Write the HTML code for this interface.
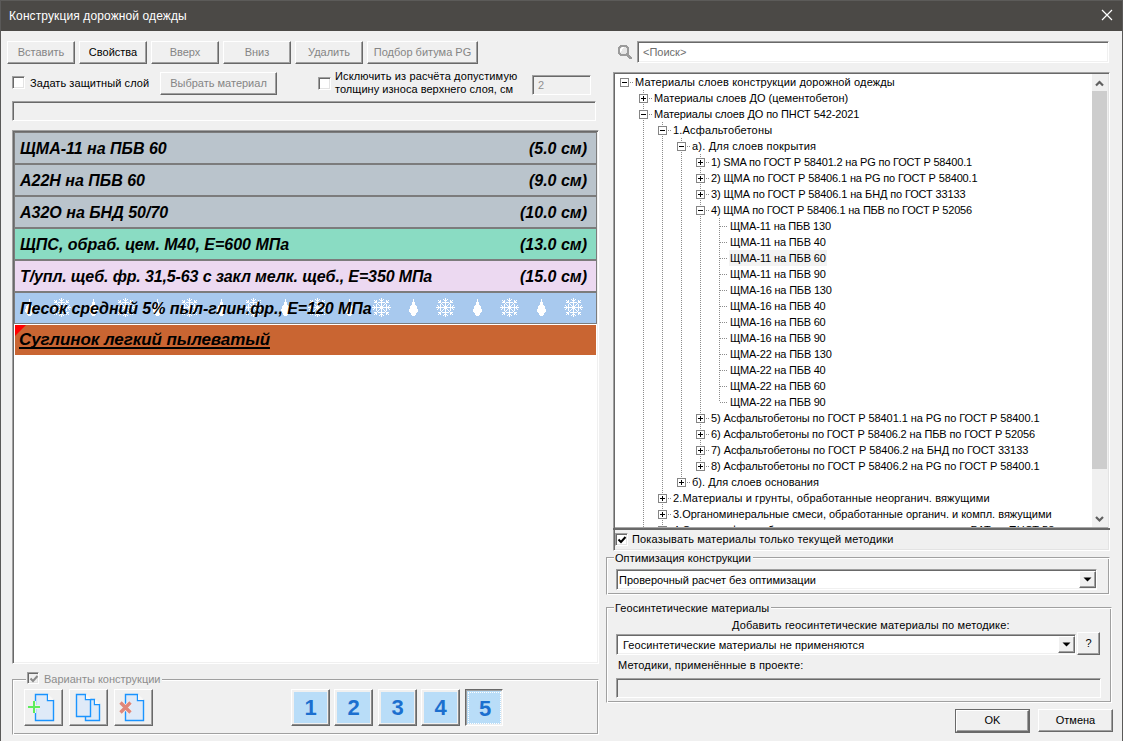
<!DOCTYPE html>
<html><head><meta charset="utf-8">
<style>
*{box-sizing:border-box;margin:0;padding:0}
html,body{width:1123px;height:741px;overflow:hidden;background:#f0f0f0}
body{position:relative;font-family:"Liberation Sans",sans-serif;font-size:11px;color:#000}
.a{position:absolute}
.t{position:absolute;white-space:pre;line-height:13px}
.raised{position:absolute;background:#f0f0f0;border:1px solid;border-color:#fff #696969 #696969 #fff;box-shadow:inset -1px -1px #a0a0a0,inset 1px 1px #f0f0f0}
.sunken{position:absolute;border:1px solid;border-color:#a0a0a0 #fff #fff #a0a0a0;box-shadow:inset 1px 1px #696969,inset -1px -1px #f0f0f0}
.btn{display:flex;align-items:center;justify-content:center;white-space:pre;padding-bottom:2px}
.dis{color:#858585}
.cb{position:absolute;width:13px;height:13px;background:#fff;border:1px solid;border-color:#a0a0a0 #fff #fff #a0a0a0;box-shadow:inset 1px 1px #696969,inset -1px -1px #e3e3e3}
.grp{position:absolute;border:1px solid;border-color:#a0a0a0 #fff #fff #a0a0a0;box-shadow:inset 1px 1px #fff,inset -1px -1px #a0a0a0}
.b16{font-size:16px;line-height:18px;font-weight:bold;font-style:italic}
.glbl{position:absolute;background:#f0f0f0;white-space:pre;line-height:13px;padding:0 2px 0 1px}
</style></head><body>
<!-- title bar -->
<div class="a" style="left:0;top:0;width:1123px;height:31px;background:#4b4946;border-top:1px solid #5c5b59"></div>
<div class="a" style="left:0;top:0;width:1px;height:741px;background:#5a5958"></div>
<div class="a" style="left:1122px;top:0;width:1px;height:741px;background:#5a5958"></div>
<div class="t" style="left:9px;top:9px;font-size:12px;line-height:15px;color:#fff;letter-spacing:0.11px">Конструкция дорожной одежды</div>
<svg class="a" style="left:1101px;top:9px" width="12" height="12" viewBox="0 0 12 12"><path d="M1 1L11 11M11 1L1 11" stroke="#fff" stroke-width="1.2"/></svg>

<!-- top buttons -->
<div class="raised btn dis" style="left:7px;top:41px;width:68px;height:23px">Вставить</div>
<div class="raised btn" style="left:79px;top:41px;width:68px;height:23px">Свойства</div>
<div class="raised btn dis" style="left:151px;top:41px;width:68px;height:23px">Вверх</div>
<div class="raised btn dis" style="left:223px;top:41px;width:68px;height:23px">Вниз</div>
<div class="raised btn dis" style="left:295px;top:41px;width:68px;height:23px">Удалить</div>
<div class="raised btn dis" style="left:367px;top:41px;width:111px;height:23px">Подбор битума PG</div>

<div class="cb" style="left:12px;top:76px"></div>
<div class="t" style="left:30px;top:77px;letter-spacing:0.07px">Задать защитный слой</div>
<div class="raised btn dis" style="left:160px;top:72px;width:117px;height:23px">Выбрать материал</div>
<div class="cb" style="left:318px;top:77px"></div>
<div class="t" style="left:335px;top:70px;letter-spacing:0.135px">Исключить из расчёта допустимую</div><div class="t" style="left:335px;top:83px;letter-spacing:0.04px">толщину износа верхнего слоя, см</div>
<div class="sunken" style="left:532px;top:75px;width:59px;height:20px;background:#f0f0f0"><span class="t dis" style="left:5px;top:3px;color:#909090">2</span></div>
<div class="sunken" style="left:12px;top:101px;width:584px;height:20px;background:#f0f0f0"></div>

<!-- layer list -->
<div class="sunken" style="left:12px;top:130px;width:587px;height:534px;background:#fff"></div>
<div class="a" style="left:14px;top:132px;width:583px;height:32px;border:1px solid #7c7c7c;background:#bac4cc"></div>
<div class="a" style="left:14px;top:164px;width:583px;height:32px;border:1px solid #7c7c7c;background:#bac4cc"></div>
<div class="a" style="left:14px;top:196px;width:583px;height:32px;border:1px solid #7c7c7c;background:#bac4cc"></div>
<div class="a" style="left:14px;top:228px;width:583px;height:32px;border:1px solid #7c7c7c;background:#8adcc3"></div>
<div class="a" style="left:14px;top:260px;width:583px;height:32px;border:1px solid #7c7c7c;background:#ecd9f1"></div>
<div class="a" style="left:14px;top:292px;width:583px;height:32px;border:1px solid #7c7c7c;background:#a8c9ee"></div>
<svg class="a" style="left:0;top:0" width="600" height="330" shape-rendering="crispEdges"><path fill="#fff" d="M61 298h1v1h-1zM59 299h1v1h-1zM61 299h1v1h-1zM63 299h1v1h-1zM54 300h1v1h-1zM56 300h1v1h-1zM60 300h3v1h-3zM66 300h1v1h-1zM68 300h1v1h-1zM55 301h2v1h-2zM61 301h1v1h-1zM66 301h2v1h-2zM54 302h3v1h-3zM58 302h7v1h-7zM66 302h3v1h-3zM57 303h1v1h-1zM61 303h1v1h-1zM65 303h1v1h-1zM56 304h1v1h-1zM58 304h1v1h-1zM61 304h1v1h-1zM64 304h1v1h-1zM66 304h1v1h-1zM53 305h1v1h-1zM56 305h1v1h-1zM59 305h1v1h-1zM61 305h1v1h-1zM63 305h1v1h-1zM66 305h1v1h-1zM69 305h1v1h-1zM54 306h1v1h-1zM56 306h1v1h-1zM60 306h3v1h-3zM66 306h1v1h-1zM68 306h1v1h-1zM52 307h19v1h-19zM54 308h1v1h-1zM56 308h1v1h-1zM60 308h3v1h-3zM66 308h1v1h-1zM68 308h1v1h-1zM53 309h1v1h-1zM56 309h1v1h-1zM59 309h1v1h-1zM61 309h1v1h-1zM63 309h1v1h-1zM66 309h1v1h-1zM69 309h1v1h-1zM56 310h1v1h-1zM58 310h1v1h-1zM61 310h1v1h-1zM64 310h1v1h-1zM66 310h1v1h-1zM57 311h1v1h-1zM61 311h1v1h-1zM65 311h1v1h-1zM54 312h3v1h-3zM58 312h7v1h-7zM66 312h3v1h-3zM55 313h2v1h-2zM61 313h1v1h-1zM66 313h2v1h-2zM54 314h1v1h-1zM56 314h1v1h-1zM60 314h3v1h-3zM66 314h1v1h-1zM68 314h1v1h-1zM59 315h1v1h-1zM61 315h1v1h-1zM63 315h1v1h-1zM61 316h1v1h-1zM29 299h1v1h-1zM29 300h1v1h-1zM29 301h1v1h-1zM28 302h3v1h-3zM28 303h3v1h-3zM28 304h3v1h-3zM27 305h5v1h-5zM26 306h7v1h-7zM26 307h7v1h-7zM26 308h7v1h-7zM25 309h9v1h-9zM25 310h9v1h-9zM25 311h9v1h-9zM26 312h7v1h-7zM27 313h5v1h-5zM27 314h5v1h-5zM28 315h3v1h-3zM125 298h1v1h-1zM123 299h1v1h-1zM125 299h1v1h-1zM127 299h1v1h-1zM118 300h1v1h-1zM120 300h1v1h-1zM124 300h3v1h-3zM130 300h1v1h-1zM132 300h1v1h-1zM119 301h2v1h-2zM125 301h1v1h-1zM130 301h2v1h-2zM118 302h3v1h-3zM122 302h7v1h-7zM130 302h3v1h-3zM121 303h1v1h-1zM125 303h1v1h-1zM129 303h1v1h-1zM120 304h1v1h-1zM122 304h1v1h-1zM125 304h1v1h-1zM128 304h1v1h-1zM130 304h1v1h-1zM117 305h1v1h-1zM120 305h1v1h-1zM123 305h1v1h-1zM125 305h1v1h-1zM127 305h1v1h-1zM130 305h1v1h-1zM133 305h1v1h-1zM118 306h1v1h-1zM120 306h1v1h-1zM124 306h3v1h-3zM130 306h1v1h-1zM132 306h1v1h-1zM116 307h19v1h-19zM118 308h1v1h-1zM120 308h1v1h-1zM124 308h3v1h-3zM130 308h1v1h-1zM132 308h1v1h-1zM117 309h1v1h-1zM120 309h1v1h-1zM123 309h1v1h-1zM125 309h1v1h-1zM127 309h1v1h-1zM130 309h1v1h-1zM133 309h1v1h-1zM120 310h1v1h-1zM122 310h1v1h-1zM125 310h1v1h-1zM128 310h1v1h-1zM130 310h1v1h-1zM121 311h1v1h-1zM125 311h1v1h-1zM129 311h1v1h-1zM118 312h3v1h-3zM122 312h7v1h-7zM130 312h3v1h-3zM119 313h2v1h-2zM125 313h1v1h-1zM130 313h2v1h-2zM118 314h1v1h-1zM120 314h1v1h-1zM124 314h3v1h-3zM130 314h1v1h-1zM132 314h1v1h-1zM123 315h1v1h-1zM125 315h1v1h-1zM127 315h1v1h-1zM125 316h1v1h-1zM93 299h1v1h-1zM93 300h1v1h-1zM93 301h1v1h-1zM92 302h3v1h-3zM92 303h3v1h-3zM92 304h3v1h-3zM91 305h5v1h-5zM90 306h7v1h-7zM90 307h7v1h-7zM90 308h7v1h-7zM89 309h9v1h-9zM89 310h9v1h-9zM89 311h9v1h-9zM90 312h7v1h-7zM91 313h5v1h-5zM91 314h5v1h-5zM92 315h3v1h-3zM189 298h1v1h-1zM187 299h1v1h-1zM189 299h1v1h-1zM191 299h1v1h-1zM182 300h1v1h-1zM184 300h1v1h-1zM188 300h3v1h-3zM194 300h1v1h-1zM196 300h1v1h-1zM183 301h2v1h-2zM189 301h1v1h-1zM194 301h2v1h-2zM182 302h3v1h-3zM186 302h7v1h-7zM194 302h3v1h-3zM185 303h1v1h-1zM189 303h1v1h-1zM193 303h1v1h-1zM184 304h1v1h-1zM186 304h1v1h-1zM189 304h1v1h-1zM192 304h1v1h-1zM194 304h1v1h-1zM181 305h1v1h-1zM184 305h1v1h-1zM187 305h1v1h-1zM189 305h1v1h-1zM191 305h1v1h-1zM194 305h1v1h-1zM197 305h1v1h-1zM182 306h1v1h-1zM184 306h1v1h-1zM188 306h3v1h-3zM194 306h1v1h-1zM196 306h1v1h-1zM180 307h19v1h-19zM182 308h1v1h-1zM184 308h1v1h-1zM188 308h3v1h-3zM194 308h1v1h-1zM196 308h1v1h-1zM181 309h1v1h-1zM184 309h1v1h-1zM187 309h1v1h-1zM189 309h1v1h-1zM191 309h1v1h-1zM194 309h1v1h-1zM197 309h1v1h-1zM184 310h1v1h-1zM186 310h1v1h-1zM189 310h1v1h-1zM192 310h1v1h-1zM194 310h1v1h-1zM185 311h1v1h-1zM189 311h1v1h-1zM193 311h1v1h-1zM182 312h3v1h-3zM186 312h7v1h-7zM194 312h3v1h-3zM183 313h2v1h-2zM189 313h1v1h-1zM194 313h2v1h-2zM182 314h1v1h-1zM184 314h1v1h-1zM188 314h3v1h-3zM194 314h1v1h-1zM196 314h1v1h-1zM187 315h1v1h-1zM189 315h1v1h-1zM191 315h1v1h-1zM189 316h1v1h-1zM157 299h1v1h-1zM157 300h1v1h-1zM157 301h1v1h-1zM156 302h3v1h-3zM156 303h3v1h-3zM156 304h3v1h-3zM155 305h5v1h-5zM154 306h7v1h-7zM154 307h7v1h-7zM154 308h7v1h-7zM153 309h9v1h-9zM153 310h9v1h-9zM153 311h9v1h-9zM154 312h7v1h-7zM155 313h5v1h-5zM155 314h5v1h-5zM156 315h3v1h-3zM253 298h1v1h-1zM251 299h1v1h-1zM253 299h1v1h-1zM255 299h1v1h-1zM246 300h1v1h-1zM248 300h1v1h-1zM252 300h3v1h-3zM258 300h1v1h-1zM260 300h1v1h-1zM247 301h2v1h-2zM253 301h1v1h-1zM258 301h2v1h-2zM246 302h3v1h-3zM250 302h7v1h-7zM258 302h3v1h-3zM249 303h1v1h-1zM253 303h1v1h-1zM257 303h1v1h-1zM248 304h1v1h-1zM250 304h1v1h-1zM253 304h1v1h-1zM256 304h1v1h-1zM258 304h1v1h-1zM245 305h1v1h-1zM248 305h1v1h-1zM251 305h1v1h-1zM253 305h1v1h-1zM255 305h1v1h-1zM258 305h1v1h-1zM261 305h1v1h-1zM246 306h1v1h-1zM248 306h1v1h-1zM252 306h3v1h-3zM258 306h1v1h-1zM260 306h1v1h-1zM244 307h19v1h-19zM246 308h1v1h-1zM248 308h1v1h-1zM252 308h3v1h-3zM258 308h1v1h-1zM260 308h1v1h-1zM245 309h1v1h-1zM248 309h1v1h-1zM251 309h1v1h-1zM253 309h1v1h-1zM255 309h1v1h-1zM258 309h1v1h-1zM261 309h1v1h-1zM248 310h1v1h-1zM250 310h1v1h-1zM253 310h1v1h-1zM256 310h1v1h-1zM258 310h1v1h-1zM249 311h1v1h-1zM253 311h1v1h-1zM257 311h1v1h-1zM246 312h3v1h-3zM250 312h7v1h-7zM258 312h3v1h-3zM247 313h2v1h-2zM253 313h1v1h-1zM258 313h2v1h-2zM246 314h1v1h-1zM248 314h1v1h-1zM252 314h3v1h-3zM258 314h1v1h-1zM260 314h1v1h-1zM251 315h1v1h-1zM253 315h1v1h-1zM255 315h1v1h-1zM253 316h1v1h-1zM221 299h1v1h-1zM221 300h1v1h-1zM221 301h1v1h-1zM220 302h3v1h-3zM220 303h3v1h-3zM220 304h3v1h-3zM219 305h5v1h-5zM218 306h7v1h-7zM218 307h7v1h-7zM218 308h7v1h-7zM217 309h9v1h-9zM217 310h9v1h-9zM217 311h9v1h-9zM218 312h7v1h-7zM219 313h5v1h-5zM219 314h5v1h-5zM220 315h3v1h-3zM317 298h1v1h-1zM315 299h1v1h-1zM317 299h1v1h-1zM319 299h1v1h-1zM310 300h1v1h-1zM312 300h1v1h-1zM316 300h3v1h-3zM322 300h1v1h-1zM324 300h1v1h-1zM311 301h2v1h-2zM317 301h1v1h-1zM322 301h2v1h-2zM310 302h3v1h-3zM314 302h7v1h-7zM322 302h3v1h-3zM313 303h1v1h-1zM317 303h1v1h-1zM321 303h1v1h-1zM312 304h1v1h-1zM314 304h1v1h-1zM317 304h1v1h-1zM320 304h1v1h-1zM322 304h1v1h-1zM309 305h1v1h-1zM312 305h1v1h-1zM315 305h1v1h-1zM317 305h1v1h-1zM319 305h1v1h-1zM322 305h1v1h-1zM325 305h1v1h-1zM310 306h1v1h-1zM312 306h1v1h-1zM316 306h3v1h-3zM322 306h1v1h-1zM324 306h1v1h-1zM308 307h19v1h-19zM310 308h1v1h-1zM312 308h1v1h-1zM316 308h3v1h-3zM322 308h1v1h-1zM324 308h1v1h-1zM309 309h1v1h-1zM312 309h1v1h-1zM315 309h1v1h-1zM317 309h1v1h-1zM319 309h1v1h-1zM322 309h1v1h-1zM325 309h1v1h-1zM312 310h1v1h-1zM314 310h1v1h-1zM317 310h1v1h-1zM320 310h1v1h-1zM322 310h1v1h-1zM313 311h1v1h-1zM317 311h1v1h-1zM321 311h1v1h-1zM310 312h3v1h-3zM314 312h7v1h-7zM322 312h3v1h-3zM311 313h2v1h-2zM317 313h1v1h-1zM322 313h2v1h-2zM310 314h1v1h-1zM312 314h1v1h-1zM316 314h3v1h-3zM322 314h1v1h-1zM324 314h1v1h-1zM315 315h1v1h-1zM317 315h1v1h-1zM319 315h1v1h-1zM317 316h1v1h-1zM285 299h1v1h-1zM285 300h1v1h-1zM285 301h1v1h-1zM284 302h3v1h-3zM284 303h3v1h-3zM284 304h3v1h-3zM283 305h5v1h-5zM282 306h7v1h-7zM282 307h7v1h-7zM282 308h7v1h-7zM281 309h9v1h-9zM281 310h9v1h-9zM281 311h9v1h-9zM282 312h7v1h-7zM283 313h5v1h-5zM283 314h5v1h-5zM284 315h3v1h-3zM381 298h1v1h-1zM379 299h1v1h-1zM381 299h1v1h-1zM383 299h1v1h-1zM374 300h1v1h-1zM376 300h1v1h-1zM380 300h3v1h-3zM386 300h1v1h-1zM388 300h1v1h-1zM375 301h2v1h-2zM381 301h1v1h-1zM386 301h2v1h-2zM374 302h3v1h-3zM378 302h7v1h-7zM386 302h3v1h-3zM377 303h1v1h-1zM381 303h1v1h-1zM385 303h1v1h-1zM376 304h1v1h-1zM378 304h1v1h-1zM381 304h1v1h-1zM384 304h1v1h-1zM386 304h1v1h-1zM373 305h1v1h-1zM376 305h1v1h-1zM379 305h1v1h-1zM381 305h1v1h-1zM383 305h1v1h-1zM386 305h1v1h-1zM389 305h1v1h-1zM374 306h1v1h-1zM376 306h1v1h-1zM380 306h3v1h-3zM386 306h1v1h-1zM388 306h1v1h-1zM372 307h19v1h-19zM374 308h1v1h-1zM376 308h1v1h-1zM380 308h3v1h-3zM386 308h1v1h-1zM388 308h1v1h-1zM373 309h1v1h-1zM376 309h1v1h-1zM379 309h1v1h-1zM381 309h1v1h-1zM383 309h1v1h-1zM386 309h1v1h-1zM389 309h1v1h-1zM376 310h1v1h-1zM378 310h1v1h-1zM381 310h1v1h-1zM384 310h1v1h-1zM386 310h1v1h-1zM377 311h1v1h-1zM381 311h1v1h-1zM385 311h1v1h-1zM374 312h3v1h-3zM378 312h7v1h-7zM386 312h3v1h-3zM375 313h2v1h-2zM381 313h1v1h-1zM386 313h2v1h-2zM374 314h1v1h-1zM376 314h1v1h-1zM380 314h3v1h-3zM386 314h1v1h-1zM388 314h1v1h-1zM379 315h1v1h-1zM381 315h1v1h-1zM383 315h1v1h-1zM381 316h1v1h-1zM349 299h1v1h-1zM349 300h1v1h-1zM349 301h1v1h-1zM348 302h3v1h-3zM348 303h3v1h-3zM348 304h3v1h-3zM347 305h5v1h-5zM346 306h7v1h-7zM346 307h7v1h-7zM346 308h7v1h-7zM345 309h9v1h-9zM345 310h9v1h-9zM345 311h9v1h-9zM346 312h7v1h-7zM347 313h5v1h-5zM347 314h5v1h-5zM348 315h3v1h-3zM445 298h1v1h-1zM443 299h1v1h-1zM445 299h1v1h-1zM447 299h1v1h-1zM438 300h1v1h-1zM440 300h1v1h-1zM444 300h3v1h-3zM450 300h1v1h-1zM452 300h1v1h-1zM439 301h2v1h-2zM445 301h1v1h-1zM450 301h2v1h-2zM438 302h3v1h-3zM442 302h7v1h-7zM450 302h3v1h-3zM441 303h1v1h-1zM445 303h1v1h-1zM449 303h1v1h-1zM440 304h1v1h-1zM442 304h1v1h-1zM445 304h1v1h-1zM448 304h1v1h-1zM450 304h1v1h-1zM437 305h1v1h-1zM440 305h1v1h-1zM443 305h1v1h-1zM445 305h1v1h-1zM447 305h1v1h-1zM450 305h1v1h-1zM453 305h1v1h-1zM438 306h1v1h-1zM440 306h1v1h-1zM444 306h3v1h-3zM450 306h1v1h-1zM452 306h1v1h-1zM436 307h19v1h-19zM438 308h1v1h-1zM440 308h1v1h-1zM444 308h3v1h-3zM450 308h1v1h-1zM452 308h1v1h-1zM437 309h1v1h-1zM440 309h1v1h-1zM443 309h1v1h-1zM445 309h1v1h-1zM447 309h1v1h-1zM450 309h1v1h-1zM453 309h1v1h-1zM440 310h1v1h-1zM442 310h1v1h-1zM445 310h1v1h-1zM448 310h1v1h-1zM450 310h1v1h-1zM441 311h1v1h-1zM445 311h1v1h-1zM449 311h1v1h-1zM438 312h3v1h-3zM442 312h7v1h-7zM450 312h3v1h-3zM439 313h2v1h-2zM445 313h1v1h-1zM450 313h2v1h-2zM438 314h1v1h-1zM440 314h1v1h-1zM444 314h3v1h-3zM450 314h1v1h-1zM452 314h1v1h-1zM443 315h1v1h-1zM445 315h1v1h-1zM447 315h1v1h-1zM445 316h1v1h-1zM413 299h1v1h-1zM413 300h1v1h-1zM413 301h1v1h-1zM412 302h3v1h-3zM412 303h3v1h-3zM412 304h3v1h-3zM411 305h5v1h-5zM410 306h7v1h-7zM410 307h7v1h-7zM410 308h7v1h-7zM409 309h9v1h-9zM409 310h9v1h-9zM409 311h9v1h-9zM410 312h7v1h-7zM411 313h5v1h-5zM411 314h5v1h-5zM412 315h3v1h-3zM509 298h1v1h-1zM507 299h1v1h-1zM509 299h1v1h-1zM511 299h1v1h-1zM502 300h1v1h-1zM504 300h1v1h-1zM508 300h3v1h-3zM514 300h1v1h-1zM516 300h1v1h-1zM503 301h2v1h-2zM509 301h1v1h-1zM514 301h2v1h-2zM502 302h3v1h-3zM506 302h7v1h-7zM514 302h3v1h-3zM505 303h1v1h-1zM509 303h1v1h-1zM513 303h1v1h-1zM504 304h1v1h-1zM506 304h1v1h-1zM509 304h1v1h-1zM512 304h1v1h-1zM514 304h1v1h-1zM501 305h1v1h-1zM504 305h1v1h-1zM507 305h1v1h-1zM509 305h1v1h-1zM511 305h1v1h-1zM514 305h1v1h-1zM517 305h1v1h-1zM502 306h1v1h-1zM504 306h1v1h-1zM508 306h3v1h-3zM514 306h1v1h-1zM516 306h1v1h-1zM500 307h19v1h-19zM502 308h1v1h-1zM504 308h1v1h-1zM508 308h3v1h-3zM514 308h1v1h-1zM516 308h1v1h-1zM501 309h1v1h-1zM504 309h1v1h-1zM507 309h1v1h-1zM509 309h1v1h-1zM511 309h1v1h-1zM514 309h1v1h-1zM517 309h1v1h-1zM504 310h1v1h-1zM506 310h1v1h-1zM509 310h1v1h-1zM512 310h1v1h-1zM514 310h1v1h-1zM505 311h1v1h-1zM509 311h1v1h-1zM513 311h1v1h-1zM502 312h3v1h-3zM506 312h7v1h-7zM514 312h3v1h-3zM503 313h2v1h-2zM509 313h1v1h-1zM514 313h2v1h-2zM502 314h1v1h-1zM504 314h1v1h-1zM508 314h3v1h-3zM514 314h1v1h-1zM516 314h1v1h-1zM507 315h1v1h-1zM509 315h1v1h-1zM511 315h1v1h-1zM509 316h1v1h-1zM477 299h1v1h-1zM477 300h1v1h-1zM477 301h1v1h-1zM476 302h3v1h-3zM476 303h3v1h-3zM476 304h3v1h-3zM475 305h5v1h-5zM474 306h7v1h-7zM474 307h7v1h-7zM474 308h7v1h-7zM473 309h9v1h-9zM473 310h9v1h-9zM473 311h9v1h-9zM474 312h7v1h-7zM475 313h5v1h-5zM475 314h5v1h-5zM476 315h3v1h-3zM573 298h1v1h-1zM571 299h1v1h-1zM573 299h1v1h-1zM575 299h1v1h-1zM566 300h1v1h-1zM568 300h1v1h-1zM572 300h3v1h-3zM578 300h1v1h-1zM580 300h1v1h-1zM567 301h2v1h-2zM573 301h1v1h-1zM578 301h2v1h-2zM566 302h3v1h-3zM570 302h7v1h-7zM578 302h3v1h-3zM569 303h1v1h-1zM573 303h1v1h-1zM577 303h1v1h-1zM568 304h1v1h-1zM570 304h1v1h-1zM573 304h1v1h-1zM576 304h1v1h-1zM578 304h1v1h-1zM565 305h1v1h-1zM568 305h1v1h-1zM571 305h1v1h-1zM573 305h1v1h-1zM575 305h1v1h-1zM578 305h1v1h-1zM581 305h1v1h-1zM566 306h1v1h-1zM568 306h1v1h-1zM572 306h3v1h-3zM578 306h1v1h-1zM580 306h1v1h-1zM564 307h19v1h-19zM566 308h1v1h-1zM568 308h1v1h-1zM572 308h3v1h-3zM578 308h1v1h-1zM580 308h1v1h-1zM565 309h1v1h-1zM568 309h1v1h-1zM571 309h1v1h-1zM573 309h1v1h-1zM575 309h1v1h-1zM578 309h1v1h-1zM581 309h1v1h-1zM568 310h1v1h-1zM570 310h1v1h-1zM573 310h1v1h-1zM576 310h1v1h-1zM578 310h1v1h-1zM569 311h1v1h-1zM573 311h1v1h-1zM577 311h1v1h-1zM566 312h3v1h-3zM570 312h7v1h-7zM578 312h3v1h-3zM567 313h2v1h-2zM573 313h1v1h-1zM578 313h2v1h-2zM566 314h1v1h-1zM568 314h1v1h-1zM572 314h3v1h-3zM578 314h1v1h-1zM580 314h1v1h-1zM571 315h1v1h-1zM573 315h1v1h-1zM575 315h1v1h-1zM573 316h1v1h-1zM541 299h1v1h-1zM541 300h1v1h-1zM541 301h1v1h-1zM540 302h3v1h-3zM540 303h3v1h-3zM540 304h3v1h-3zM539 305h5v1h-5zM538 306h7v1h-7zM538 307h7v1h-7zM538 308h7v1h-7zM537 309h9v1h-9zM537 310h9v1h-9zM537 311h9v1h-9zM538 312h7v1h-7zM539 313h5v1h-5zM539 314h5v1h-5zM540 315h3v1h-3z"/></svg>
<div class="t b16" style="left:20px;top:140px">ЩМА-11 на ПБВ 60</div>
<div class="t b16" style="right:536px;top:140px">(5.0 см)</div>
<div class="t b16" style="left:20px;top:172px">А22Н на ПБВ 60</div>
<div class="t b16" style="right:536px;top:172px">(9.0 см)</div>
<div class="t b16" style="left:20px;top:204px">А32О на БНД 50/70</div>
<div class="t b16" style="right:536px;top:204px">(10.0 см)</div>
<div class="t b16" style="left:20px;top:236px">ЩПС, обраб. цем. М40, Е=600 МПа</div>
<div class="t b16" style="right:536px;top:236px">(13.0 см)</div>
<div class="t b16" style="left:20px;top:268px;letter-spacing:-0.127px">Т/упл. щеб. фр. 31,5-63 с закл мелк. щеб., Е=350 МПа</div>
<div class="t b16" style="right:536px;top:268px">(15.0 см)</div>
<div class="t b16" style="left:20px;top:300px;letter-spacing:-0.06px">Песок средний 5% пыл-глин.фр., Е=120 МПа</div>
<div class="a" style="left:15px;top:325px;width:581px;height:30px;background:#c96532"></div>
<svg class="a" style="left:15px;top:325px" width="11" height="11"><path d="M0 0H11L0 11Z" fill="#f00"/></svg>
<div class="t b16" style="left:19px;top:331px;font-size:17px;letter-spacing:-0.08px;text-decoration:underline;text-underline-offset:2px;text-decoration-thickness:2px;text-decoration-skip-ink:none">Суглинок легкий пылеватый</div>
<!-- tree -->
<div class="a" style="left:613px;top:72px;width:497px;height:479px;border:1px solid;border-color:#a0a0a0 #fff #fff #a0a0a0;box-shadow:inset 1px 1px #696969,inset -1px -1px #e3e3e3;background:#f0f0f0"></div>
<div class="a" style="left:615px;top:74px;width:477px;height:453px;background:#fff;overflow:hidden" id="tv">
<div class="a" style="left:114px;top:176px;width:98px;height:16px;background:#f3f3f3"></div>
<div class="a" style="left:28px;top:16px;width:1px;height:468px;background:repeating-linear-gradient(to bottom,#8c8c8c 0 1px,transparent 1px 2px)"></div>
<div class="a" style="left:47px;top:48px;width:1px;height:436px;background:repeating-linear-gradient(to bottom,#8c8c8c 0 1px,transparent 1px 2px)"></div>
<div class="a" style="left:66px;top:64px;width:1px;height:344px;background:repeating-linear-gradient(to bottom,#8c8c8c 0 1px,transparent 1px 2px)"></div>
<div class="a" style="left:85px;top:80px;width:1px;height:312px;background:repeating-linear-gradient(to bottom,#8c8c8c 0 1px,transparent 1px 2px)"></div>
<div class="a" style="left:104px;top:144px;width:1px;height:184px;background:repeating-linear-gradient(to bottom,#8c8c8c 0 1px,transparent 1px 2px)"></div>
<div class="a" style="left:15px;top:8px;width:3px;height:1px;background:repeating-linear-gradient(to right,#8c8c8c 0 1px,transparent 1px 2px)"></div>
<div class="a" style="left:34px;top:24px;width:3px;height:1px;background:repeating-linear-gradient(to right,#8c8c8c 0 1px,transparent 1px 2px)"></div>
<div class="a" style="left:34px;top:40px;width:3px;height:1px;background:repeating-linear-gradient(to right,#8c8c8c 0 1px,transparent 1px 2px)"></div>
<div class="a" style="left:53px;top:56px;width:3px;height:1px;background:repeating-linear-gradient(to right,#8c8c8c 0 1px,transparent 1px 2px)"></div>
<div class="a" style="left:72px;top:72px;width:3px;height:1px;background:repeating-linear-gradient(to right,#8c8c8c 0 1px,transparent 1px 2px)"></div>
<div class="a" style="left:91px;top:88px;width:3px;height:1px;background:repeating-linear-gradient(to right,#8c8c8c 0 1px,transparent 1px 2px)"></div>
<div class="a" style="left:91px;top:104px;width:3px;height:1px;background:repeating-linear-gradient(to right,#8c8c8c 0 1px,transparent 1px 2px)"></div>
<div class="a" style="left:91px;top:120px;width:3px;height:1px;background:repeating-linear-gradient(to right,#8c8c8c 0 1px,transparent 1px 2px)"></div>
<div class="a" style="left:91px;top:136px;width:3px;height:1px;background:repeating-linear-gradient(to right,#8c8c8c 0 1px,transparent 1px 2px)"></div>
<div class="a" style="left:105px;top:152px;width:8px;height:1px;background:repeating-linear-gradient(to right,#8c8c8c 0 1px,transparent 1px 2px)"></div>
<div class="a" style="left:105px;top:168px;width:8px;height:1px;background:repeating-linear-gradient(to right,#8c8c8c 0 1px,transparent 1px 2px)"></div>
<div class="a" style="left:105px;top:184px;width:8px;height:1px;background:repeating-linear-gradient(to right,#8c8c8c 0 1px,transparent 1px 2px)"></div>
<div class="a" style="left:105px;top:200px;width:8px;height:1px;background:repeating-linear-gradient(to right,#8c8c8c 0 1px,transparent 1px 2px)"></div>
<div class="a" style="left:105px;top:216px;width:8px;height:1px;background:repeating-linear-gradient(to right,#8c8c8c 0 1px,transparent 1px 2px)"></div>
<div class="a" style="left:105px;top:232px;width:8px;height:1px;background:repeating-linear-gradient(to right,#8c8c8c 0 1px,transparent 1px 2px)"></div>
<div class="a" style="left:105px;top:248px;width:8px;height:1px;background:repeating-linear-gradient(to right,#8c8c8c 0 1px,transparent 1px 2px)"></div>
<div class="a" style="left:105px;top:264px;width:8px;height:1px;background:repeating-linear-gradient(to right,#8c8c8c 0 1px,transparent 1px 2px)"></div>
<div class="a" style="left:105px;top:280px;width:8px;height:1px;background:repeating-linear-gradient(to right,#8c8c8c 0 1px,transparent 1px 2px)"></div>
<div class="a" style="left:105px;top:296px;width:8px;height:1px;background:repeating-linear-gradient(to right,#8c8c8c 0 1px,transparent 1px 2px)"></div>
<div class="a" style="left:105px;top:312px;width:8px;height:1px;background:repeating-linear-gradient(to right,#8c8c8c 0 1px,transparent 1px 2px)"></div>
<div class="a" style="left:105px;top:328px;width:8px;height:1px;background:repeating-linear-gradient(to right,#8c8c8c 0 1px,transparent 1px 2px)"></div>
<div class="a" style="left:91px;top:344px;width:3px;height:1px;background:repeating-linear-gradient(to right,#8c8c8c 0 1px,transparent 1px 2px)"></div>
<div class="a" style="left:91px;top:360px;width:3px;height:1px;background:repeating-linear-gradient(to right,#8c8c8c 0 1px,transparent 1px 2px)"></div>
<div class="a" style="left:91px;top:376px;width:3px;height:1px;background:repeating-linear-gradient(to right,#8c8c8c 0 1px,transparent 1px 2px)"></div>
<div class="a" style="left:91px;top:392px;width:3px;height:1px;background:repeating-linear-gradient(to right,#8c8c8c 0 1px,transparent 1px 2px)"></div>
<div class="a" style="left:72px;top:408px;width:3px;height:1px;background:repeating-linear-gradient(to right,#8c8c8c 0 1px,transparent 1px 2px)"></div>
<div class="a" style="left:53px;top:424px;width:3px;height:1px;background:repeating-linear-gradient(to right,#8c8c8c 0 1px,transparent 1px 2px)"></div>
<div class="a" style="left:53px;top:440px;width:3px;height:1px;background:repeating-linear-gradient(to right,#8c8c8c 0 1px,transparent 1px 2px)"></div>
<div class="a" style="left:53px;top:456px;width:3px;height:1px;background:repeating-linear-gradient(to right,#8c8c8c 0 1px,transparent 1px 2px)"></div>
<div class="a" style="left:5px;top:4px;width:9px;height:9px;border:1px solid #858585;background:#fff"><div class="a" style="left:1px;top:3px;width:5px;height:1px;background:#000"></div></div>
<div class="a" style="left:24px;top:20px;width:9px;height:9px;border:1px solid #858585;background:#fff"><div class="a" style="left:1px;top:3px;width:5px;height:1px;background:#000"></div><div class="a" style="left:3px;top:1px;width:1px;height:5px;background:#000"></div></div>
<div class="a" style="left:24px;top:36px;width:9px;height:9px;border:1px solid #858585;background:#fff"><div class="a" style="left:1px;top:3px;width:5px;height:1px;background:#000"></div></div>
<div class="a" style="left:43px;top:52px;width:9px;height:9px;border:1px solid #858585;background:#fff"><div class="a" style="left:1px;top:3px;width:5px;height:1px;background:#000"></div></div>
<div class="a" style="left:62px;top:68px;width:9px;height:9px;border:1px solid #858585;background:#fff"><div class="a" style="left:1px;top:3px;width:5px;height:1px;background:#000"></div></div>
<div class="a" style="left:81px;top:84px;width:9px;height:9px;border:1px solid #858585;background:#fff"><div class="a" style="left:1px;top:3px;width:5px;height:1px;background:#000"></div><div class="a" style="left:3px;top:1px;width:1px;height:5px;background:#000"></div></div>
<div class="a" style="left:81px;top:100px;width:9px;height:9px;border:1px solid #858585;background:#fff"><div class="a" style="left:1px;top:3px;width:5px;height:1px;background:#000"></div><div class="a" style="left:3px;top:1px;width:1px;height:5px;background:#000"></div></div>
<div class="a" style="left:81px;top:116px;width:9px;height:9px;border:1px solid #858585;background:#fff"><div class="a" style="left:1px;top:3px;width:5px;height:1px;background:#000"></div><div class="a" style="left:3px;top:1px;width:1px;height:5px;background:#000"></div></div>
<div class="a" style="left:81px;top:132px;width:9px;height:9px;border:1px solid #858585;background:#fff"><div class="a" style="left:1px;top:3px;width:5px;height:1px;background:#000"></div></div>
<div class="a" style="left:81px;top:340px;width:9px;height:9px;border:1px solid #858585;background:#fff"><div class="a" style="left:1px;top:3px;width:5px;height:1px;background:#000"></div><div class="a" style="left:3px;top:1px;width:1px;height:5px;background:#000"></div></div>
<div class="a" style="left:81px;top:356px;width:9px;height:9px;border:1px solid #858585;background:#fff"><div class="a" style="left:1px;top:3px;width:5px;height:1px;background:#000"></div><div class="a" style="left:3px;top:1px;width:1px;height:5px;background:#000"></div></div>
<div class="a" style="left:81px;top:372px;width:9px;height:9px;border:1px solid #858585;background:#fff"><div class="a" style="left:1px;top:3px;width:5px;height:1px;background:#000"></div><div class="a" style="left:3px;top:1px;width:1px;height:5px;background:#000"></div></div>
<div class="a" style="left:81px;top:388px;width:9px;height:9px;border:1px solid #858585;background:#fff"><div class="a" style="left:1px;top:3px;width:5px;height:1px;background:#000"></div><div class="a" style="left:3px;top:1px;width:1px;height:5px;background:#000"></div></div>
<div class="a" style="left:62px;top:404px;width:9px;height:9px;border:1px solid #858585;background:#fff"><div class="a" style="left:1px;top:3px;width:5px;height:1px;background:#000"></div><div class="a" style="left:3px;top:1px;width:1px;height:5px;background:#000"></div></div>
<div class="a" style="left:43px;top:420px;width:9px;height:9px;border:1px solid #858585;background:#fff"><div class="a" style="left:1px;top:3px;width:5px;height:1px;background:#000"></div><div class="a" style="left:3px;top:1px;width:1px;height:5px;background:#000"></div></div>
<div class="a" style="left:43px;top:436px;width:9px;height:9px;border:1px solid #858585;background:#fff"><div class="a" style="left:1px;top:3px;width:5px;height:1px;background:#000"></div><div class="a" style="left:3px;top:1px;width:1px;height:5px;background:#000"></div></div>
<div class="a" style="left:43px;top:452px;width:9px;height:9px;border:1px solid #858585;background:#fff"><div class="a" style="left:1px;top:3px;width:5px;height:1px;background:#000"></div><div class="a" style="left:3px;top:1px;width:1px;height:5px;background:#000"></div></div>
<div class="t" style="left:20px;top:0px;line-height:16px;letter-spacing:0.133px">Материалы слоев конструкции дорожной одежды</div>
<div class="t" style="left:39px;top:16px;line-height:16px;letter-spacing:0.019px">Материалы слоев ДО (цементобетон)</div>
<div class="t" style="left:39px;top:32px;line-height:16px;letter-spacing:-0.106px">Материалы слоев ДО по ПНСТ 542-2021</div>
<div class="t" style="left:58px;top:48px;line-height:16px;letter-spacing:0.173px">1.Асфальтобетоны</div>
<div class="t" style="left:77px;top:64px;line-height:16px;letter-spacing:0.19px">а). Для слоев покрытия</div>
<div class="t" style="left:96px;top:80px;line-height:16px;letter-spacing:-0.177px">1) SMA по ГОСТ Р 58401.2 на PG по ГОСТ Р 58400.1</div>
<div class="t" style="left:96px;top:96px;line-height:16px;letter-spacing:-0.136px">2) ЩМА по ГОСТ Р 58406.1 на PG по ГОСТ Р 58400.1</div>
<div class="t" style="left:96px;top:112px;line-height:16px;letter-spacing:-0.125px">3) ЩМА по ГОСТ Р 58406.1 на БНД по ГОСТ 33133</div>
<div class="t" style="left:96px;top:128px;line-height:16px;letter-spacing:-0.202px">4) ЩМА по ГОСТ Р 58406.1 на ПБВ по ГОСТ Р 52056</div>
<div class="t" style="left:115px;top:144px;line-height:16px;letter-spacing:-0.188px">ЩМА-11 на ПБВ 130</div>
<div class="t" style="left:115px;top:160px;line-height:16px;letter-spacing:-0.14px">ЩМА-11 на ПБВ 40</div>
<div class="t" style="left:115px;top:176px;line-height:16px;letter-spacing:-0.14px">ЩМА-11 на ПБВ 60</div>
<div class="t" style="left:115px;top:192px;line-height:16px;letter-spacing:-0.14px">ЩМА-11 на ПБВ 90</div>
<div class="t" style="left:115px;top:208px;line-height:16px;letter-spacing:-0.188px">ЩМА-16 на ПБВ 130</div>
<div class="t" style="left:115px;top:224px;line-height:16px;letter-spacing:-0.207px">ЩМА-16 на ПБВ 40</div>
<div class="t" style="left:115px;top:240px;line-height:16px;letter-spacing:-0.207px">ЩМА-16 на ПБВ 60</div>
<div class="t" style="left:115px;top:256px;line-height:16px;letter-spacing:-0.207px">ЩМА-16 на ПБВ 90</div>
<div class="t" style="left:115px;top:272px;line-height:16px;letter-spacing:-0.188px">ЩМА-22 на ПБВ 130</div>
<div class="t" style="left:115px;top:288px;line-height:16px;letter-spacing:-0.207px">ЩМА-22 на ПБВ 40</div>
<div class="t" style="left:115px;top:304px;line-height:16px;letter-spacing:-0.207px">ЩМА-22 на ПБВ 60</div>
<div class="t" style="left:115px;top:320px;line-height:16px;letter-spacing:-0.207px">ЩМА-22 на ПБВ 90</div>
<div class="t" style="left:96px;top:336px;line-height:16px;letter-spacing:-0.086px">5) Асфальтобетоны по ГОСТ Р 58401.1 на PG по ГОСТ Р 58400.1</div>
<div class="t" style="left:96px;top:352px;line-height:16px;letter-spacing:-0.118px">6) Асфальтобетоны по ГОСТ Р 58406.2 на ПБВ по ГОСТ Р 52056</div>
<div class="t" style="left:96px;top:368px;line-height:16px;letter-spacing:-0.06px">7) Асфальтобетоны по ГОСТ Р 58406.2 на БНД по ГОСТ 33133</div>
<div class="t" style="left:96px;top:384px;line-height:16px;letter-spacing:-0.086px">8) Асфальтобетоны по ГОСТ Р 58406.2 на PG по ГОСТ Р 58400.1</div>
<div class="t" style="left:77px;top:400px;line-height:16px;letter-spacing:0.045px">б). Для слоев основания</div>
<div class="t" style="left:58px;top:416px;line-height:16px;letter-spacing:0.125px">2.Материалы и грунты, обработанные неорганич. вяжущими</div>
<div class="t" style="left:58px;top:432px;line-height:16px;letter-spacing:-0.012px">3.Органоминеральные смеси, обработанные органич. и компл. вяжущими</div>
<div class="t" style="left:58px;top:448px;line-height:16px;letter-spacing:0px">4.Смеси асфальтобетонные горячие и теплые для слоев  БАТ по ПНСТ 58</div>
</div>
<div class="a" style="left:1092px;top:74px;width:16px;height:453px;background:#f0f0f0"></div>
<div class="a" style="left:1092px;top:91px;width:15px;height:378px;background:#cdcdcd"></div>
<svg class="a" style="left:1092px;top:74px" width="17" height="17"><path d="M4 11.5L7.5 8L11 11.5" stroke="#606060" stroke-width="2.2" fill="none"/></svg>
<svg class="a" style="left:1092px;top:510px" width="17" height="17"><path d="M4 7L7.5 10.5L11 7" stroke="#606060" stroke-width="2.2" fill="none"/></svg>
<div class="a" style="left:615px;top:527px;width:493px;height:1px;background:#a8a8a8"></div>
<div class="a" style="left:613px;top:528px;width:497px;height:2px;background:#696969"></div>
<div class="cb" style="left:615px;top:533px;width:13px;height:13px"><svg class="a" style="left:1px;top:1px" width="10" height="10"><path d="M1.5 4.5L4 7L8.5 2" stroke="#000" stroke-width="2" fill="none"/></svg></div>
<div class="t" style="left:632px;top:533px;letter-spacing:0.17px">Показывать материалы только текущей методики</div>
<!-- search -->
<svg class="a" style="left:600px;top:40px" width="40" height="24" viewBox="600 40 40 24" shape-rendering="crispEdges"><path fill="#e6e6e6" d="M621 47h5v1h-5zM620 48h7v1h-7zM620 49h7v1h-7zM620 50h7v1h-7zM620 51h7v1h-7zM620 52h7v1h-7zM621 53h5v1h-5z"/><path fill="#fff" d="M622 47h2v1h-2zM621 48h2v1h-2zM620 49h2v1h-2zM620 50h2v1h-2zM620 51h1v1h-1z"/><path fill="#9b9b9b" d="M620 45h7v1h-7zM619 46h9v1h-9zM618 47h3v1h-3zM626 47h3v1h-3zM618 48h2v1h-2zM627 48h2v1h-2zM618 49h2v1h-2zM627 49h2v1h-2zM618 50h2v1h-2zM627 50h2v1h-2zM618 51h2v1h-2zM627 51h2v1h-2zM618 52h2v1h-2zM627 52h2v1h-2zM618 53h3v1h-3zM626 53h3v1h-3zM619 54h10v1h-10zM620 55h10v1h-10zM627 56h4v1h-4zM628 57h4v1h-4zM629 58h3v1h-3z"/></svg>
<div class="sunken" style="left:637px;top:41px;width:472px;height:22px;background:#fff"><span class="t" style="left:5px;top:4px;color:#6d6d6d">&lt;Поиск&gt;</span></div>

<!-- optimization group -->
<div class="grp" style="left:606px;top:557px;width:504px;height:38px"></div>
<div class="glbl" style="left:614px;top:552px;letter-spacing:0.06px">Оптимизация конструкции</div>
<div class="sunken" style="left:616px;top:569px;width:481px;height:21px;background:#fff"><span class="t" style="left:2px;top:4px">Проверочный расчет без оптимизации</span>
<div class="raised" style="left:462px;top:1px;width:17px;height:17px"><svg class="a" style="left:3px;top:5px" width="9" height="6"><path d="M0.5 0.5H8.5L4.5 4.5Z" fill="#000"/></svg></div></div>

<!-- geosynthetics group -->
<div class="grp" style="left:606px;top:607px;width:506px;height:96px"></div>
<div class="glbl" style="left:614px;top:602px;letter-spacing:0.1px">Геосинтетические материалы</div>
<div class="t" style="left:732px;top:619px;letter-spacing:0.14px">Добавить геосинтетические материалы по методике:</div>
<div class="sunken" style="left:616px;top:634px;width:460px;height:21px;background:#fff"><span class="t" style="left:6px;top:4px;letter-spacing:0.07px">Геосинтетические материалы не применяются</span>
<div class="raised" style="left:441px;top:1px;width:17px;height:17px"><svg class="a" style="left:3px;top:5px" width="9" height="6"><path d="M0.5 0.5H8.5L4.5 4.5Z" fill="#000"/></svg></div></div>
<div class="raised btn" style="left:1077px;top:632px;width:23px;height:23px">?</div>
<div class="t" style="left:618px;top:659px;letter-spacing:0.135px">Методики, применённые в проекте:</div>
<div class="sunken" style="left:616px;top:678px;width:485px;height:20px;background:#f0f0f0"></div>

<!-- OK / Cancel -->
<div class="a" style="left:955px;top:709px;width:75px;height:24px;border:1px solid #696969"></div>
<div class="raised btn" style="left:956px;top:710px;width:73px;height:22px">OK</div>
<div class="raised btn" style="left:1038px;top:709px;width:75px;height:23px">Отмена</div>

<!-- variants group -->
<div class="grp" style="left:12px;top:679px;width:587px;height:56px"></div>
<div class="a" style="left:26px;top:671px;width:136px;height:14px;background:#f0f0f0"></div>
<div class="cb" style="left:27px;top:672px;width:12px;height:12px;background:#f0f0f0"><svg class="a" style="left:1px;top:1px" width="10" height="10"><path d="M1.5 4.5L4 7L8.5 2" stroke="#8a8a8a" stroke-width="2" fill="none"/></svg></div>
<div class="t dis" style="left:44px;top:673px;color:#8d8d8d">Варианты конструкции</div>
<div class="raised" style="left:24px;top:689px;width:39px;height:37px"></div>
<div class="raised" style="left:69px;top:689px;width:39px;height:37px"></div>
<div class="raised" style="left:114px;top:689px;width:39px;height:37px"></div>
<svg class="a" style="left:0;top:680px" width="160" height="50" viewBox="0 680 160 50">
<path d="M35.5 694.5H47.5V700.5H53.5V720.5H35.5Z" fill="#dfeaf8" stroke="#1a94ff" stroke-width="1.4"/><path d="M48 694L54 700H48Z" fill="#f8f8f8"/>
<path d="M28 707H40M34 701V713" stroke="#f0f0f0" stroke-width="4"/>
<path d="M28 707H40M34 701V713" stroke="#5cec5c" stroke-width="2"/>
<path d="M85.5 699.5H94.5V704.5H99.5V720.5H85.5Z" fill="#dfeaf8" stroke="#1a94ff" stroke-width="1.4"/><path d="M95 699L100 704H95Z" fill="#f8f8f8"/>
<path d="M76.5 694.5H85.5V699.5H90.5V716.5H76.5Z" fill="#dfeaf8" stroke="#1a94ff" stroke-width="1.4"/><path d="M86 694L91 699H86Z" fill="#f8f8f8"/>
<path d="M125.5 694.5H137.5V700.5H143.5V720.5H125.5Z" fill="#dfeaf8" stroke="#1a94ff" stroke-width="1.4"/><path d="M138 694L144 700H138Z" fill="#f8f8f8"/>
<path d="M120.5 702.5L130.5 712.5M130.5 702.5L120.5 712.5" stroke="#f0f0f0" stroke-width="5"/>
<path d="M120.5 702.5L130.5 712.5M130.5 702.5L120.5 712.5" stroke="#e0877a" stroke-width="3.4"/>
</svg>
<div class="raised btn" style="left:291px;top:689px;width:39px;height:37px;background:#b9ddf8;box-shadow:inset -1px -1px #8a8a8a,inset -2px -2px #f0f0f0,inset 2px 2px #f0f0f0;padding:0"><span style="font:bold 22px/24px 'Liberation Sans';color:#1b6fcf">1</span></div>
<div class="raised btn" style="left:334px;top:689px;width:39px;height:37px;background:#b9ddf8;box-shadow:inset -1px -1px #8a8a8a,inset -2px -2px #f0f0f0,inset 2px 2px #f0f0f0;padding:0"><span style="font:bold 22px/24px 'Liberation Sans';color:#1b6fcf">2</span></div>
<div class="raised btn" style="left:378px;top:689px;width:39px;height:37px;background:#b9ddf8;box-shadow:inset -1px -1px #8a8a8a,inset -2px -2px #f0f0f0,inset 2px 2px #f0f0f0;padding:0"><span style="font:bold 22px/24px 'Liberation Sans';color:#1b6fcf">3</span></div>
<div class="raised btn" style="left:421px;top:689px;width:39px;height:37px;background:#b9ddf8;box-shadow:inset -1px -1px #8a8a8a,inset -2px -2px #f0f0f0,inset 2px 2px #f0f0f0;padding:0"><span style="font:bold 22px/24px 'Liberation Sans';color:#1b6fcf">4</span></div>
<div class="a btn" style="left:465px;top:689px;width:38px;height:37px;background:#b9ddf8;border:1px solid;border-color:#696969 #fff #fff #696969;box-shadow:inset 1px 1px #a0a0a0,inset -1px -1px #f0f0f0;padding:2px 0 0 2px"><span style="font:bold 22px/24px 'Liberation Sans';color:#1b6fcf">5</span></div>
<div class="a" style="left:468px;top:692px;width:33px;height:32px;border:1px dotted #fff"></div>
</body></html>
